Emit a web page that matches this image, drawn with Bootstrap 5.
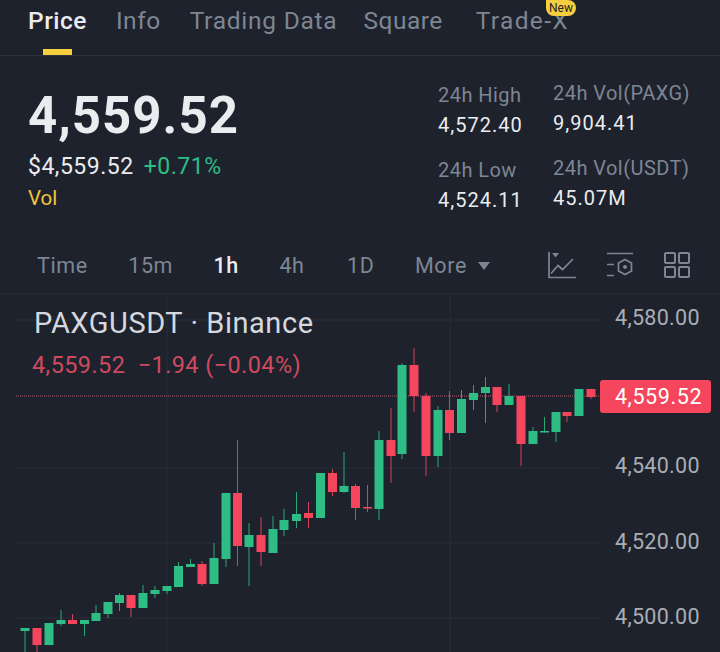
<!DOCTYPE html>
<html lang="en">
<head>
  <meta charset="UTF-8" />
  <title>PAXGUSDT</title>
  <link href="https://cdn.jsdelivr.net/npm/bootstrap@5.3.3/dist/css/bootstrap.min.css" rel="stylesheet">
  <style>
    body { background: #1e222d; font-family: Roboto, "Liberation Sans", sans-serif; color: #eaecef; width: 720px; height: 652px; overflow: hidden; }
    .tab-bar { height: 56px; padding-left: 28px; gap: 29px; border-bottom: 1px solid #2c323c; font-size: 24.5px; letter-spacing: .5px; color: #7d8693; }
    .tab-item { position: relative; line-height: 42px; }
    .tab-on { color: #eaecef; font-weight: 500; }
    .tab-on::after { content: ""; position: absolute; left: 15px; top: 49px; width: 29px; height: 6px; background: #f5cf3f; }
    .tab-wide { letter-spacing: .75px; margin-right: -3px; }
    .tab-last { letter-spacing: 1.35px; margin-left: 4px; }
    .new-tag { position: absolute; right: -7px; top: 0; width: 30px; height: 16px; border-radius: 0 8px 8px 8px; background: #f5cf3f; color: #1e222d; font-size: 12px; line-height: 16px; letter-spacing: 0; text-align: center; }
    .stats-wrap { height: 181px; padding: 0 52px 0 28px; }
    .stats-right { padding-top: 20px; }
    .big-price { font-size: 51px; font-weight: 700; line-height: 60px; margin-top: 30px; letter-spacing: 1px; color: #eaecef; }
    .sub-line { font-size: 23px; line-height: 26px; margin-top: 8px; letter-spacing: .5px; }
    .up-text { color: #2ebd85; }
    .vol-text { color: #f0c53c; font-size: 20.5px; line-height: 24px; margin-top: 6px; }
    .stat-col { width: 115px; padding-top: 3px; }
    .stat-col-b { padding-top: 1px; }
    .stat-label { font-size: 20px; line-height: 24px; color: #7d8693; letter-spacing: .45px; white-space: nowrap; }
    .stat-val { font-size: 20px; line-height: 24px; margin-top: 6px; margin-bottom: 21px; letter-spacing: 1px; color: #eaecef; }
    .tf-bar { height: 57px; padding: 2px 30px 0 37px; border-bottom: 1px solid #252a35; font-size: 21.5px; color: #7d8693; letter-spacing: .6px; }
    .tf-on { color: #eaecef; font-weight: 500; }
    .tf-list { gap: 40.5px; }
    .tf-shift { margin-left: 2px; }
    .tf-tri { display: inline-block; margin-left: 11px; border: 6.5px solid transparent; border-top: 8px solid #7d8693; border-bottom: 0; vertical-align: 3px; }
    .tool-icons { gap: 30px; margin-top: -2px; }
    .chart-area { position: relative; height: 358px; }
    .chart-area svg.plot { position: absolute; left: 0; top: 0; }
    .legend-name { position: absolute; left: 34px; top: 11px; font-size: 29px; line-height: 36px; letter-spacing: .55px; color: #d5d8de; }
    .legend-vals { position: absolute; left: 32px; top: 57px; font-size: 23.5px; line-height: 28px; letter-spacing: .4px; color: #cf4a5e; white-space: pre; }
    .axis-label { position: absolute; left: 615px; font-size: 21.5px; line-height: 26px; color: #a9adb5; letter-spacing: .3px; }
    .price-tag { position: absolute; left: 600px; top: 86px; width: 111px; height: 33px; padding-left: 6px; border-radius: 3px; background: #f6465d; color: #fff; font-size: 21.5px; line-height: 33px; text-align: center; letter-spacing: .6px; }
  </style>
</head>
<body>

  <div class="tab-bar d-flex align-items-start">
    <div class="tab-item tab-on">Price</div>
    <div class="tab-item">Info</div>
    <div class="tab-item tab-wide">Trading Data</div>
    <div class="tab-item">Square</div>
    <div class="tab-item tab-last">Trade-X<span class="new-tag">New</span></div>
  </div>

  <div class="stats-wrap d-flex justify-content-between">
    <div>
      <div class="big-price">4,559.52</div>
      <div class="sub-line">$4,559.52 <span class="up-text ms-1">+0.71%</span></div>
      <div class="vol-text">Vol</div>
    </div>
    <div class="stats-right d-flex">
      <div class="stat-col">
        <div class="stat-label mt-1">24h High</div>
        <div class="stat-val">4,572.40</div>
        <div class="stat-label">24h Low</div>
        <div class="stat-val">4,524.11</div>
      </div>
      <div class="stat-col stat-col-b">
        <div class="stat-label mt-1">24h Vol(PAXG)</div>
        <div class="stat-val">9,904.41</div>
        <div class="stat-label">24h Vol(USDT)</div>
        <div class="stat-val">45.07M</div>
      </div>
    </div>
  </div>

  <div class="tf-bar d-flex align-items-center justify-content-between">
    <div class="tf-list d-flex align-items-center">
      <span>Time</span><span>15m</span><span class="tf-on">1h</span><span>4h</span><span class="tf-shift">1D</span>
      <span>More<i class="tf-tri"></i></span>
    </div>
    <div class="tool-icons d-flex align-items-center">
      <svg width="28" height="28" viewBox="0 0 28 28" fill="none" stroke="#7d8693" stroke-width="1.7">
        <path d="M1 1V26.5H28M3 22.5L10 14.5L14.5 18.5L25 8"/>
        <path d="M4 2h7l-3.5 4.5z" fill="#7d8693" stroke="none"/>
      </svg>
      <svg width="28" height="28" viewBox="0 0 28 28" fill="none" stroke="#7d8693" stroke-width="1.7">
        <path d="M1 2.5H27M1 13.5H8M1 24.5H8"/>
        <path d="M19 8.5L25.5 12V20L19 23.5L12.5 20V12z"/>
        <circle cx="19" cy="16" r="2" fill="#7d8693" stroke="none"/>
      </svg>
      <svg width="26" height="26" viewBox="0 0 26 26" fill="none" stroke="#7d8693" stroke-width="2">
        <rect x="1" y="1" width="10" height="10" rx="1"/><rect x="15" y="1" width="10" height="10" rx="1"/>
        <rect x="1" y="15" width="10" height="10" rx="1"/><rect x="15" y="15" width="10" height="10" rx="1"/>
      </svg>
    </div>
  </div>

  <div class="chart-area">
    <svg class="plot" id="plot" width="720" height="358"></svg>
    <div class="legend-name">PAXGUSDT · Binance</div>
    <div class="legend-vals">4,559.52  −1.94 (−0.04%)</div>
    <div class="axis-label" style="top:11px">4,580.00</div>
    <div class="axis-label" style="top:159px">4,540.00</div>
    <div class="axis-label" style="top:235px">4,520.00</div>
    <div class="axis-label" style="top:310px">4,500.00</div>
    <div class="price-tag">4,559.52</div>
  </div>

  <script src="https://cdn.jsdelivr.net/npm/bootstrap@5.3.3/dist/js/bootstrap.bundle.min.js"></script>
  <script>
    // candles: x, up?, wick top, body top, body bottom, wick bottom (page y)
    const candles = [
      [25,1,628,628,631,660],[37,0,628,628,645,660],[49,1,623,623,645,645],[61,1,610,620,624,626],
      [72.5,0,614,620,624,624],[84.5,1,620,620,624,636],[96,1,605,613,621,621],[108,1,602,602,614,618],
      [119.5,1,593,595,603,611],[131,0,595,595,608,617],[143,1,585,593,608,608],[155,1,586,590,594,598],
      [167,1,586,586,591,594],[178.5,1,562,566,587,587],[190.5,1,559,564,567,567],[202,0,561,564,584,586],
      [214,1,543,558,584,584],[226,1,493,493,559,567],[237.5,0,440,493,546,566],[249,1,523,535,547,586],
      [261,0,517,535,552,566],[273,1,516,529,553,553],[284,1,509,520,530,536],[296.5,1,492,514,521,528],
      [308.5,0,502,513,518,528],[320.5,1,473,473,518,518],[332.5,0,469,473,492,496],[344,1,452,486,492,493],
      [355.5,0,484,486,508,520],[367.5,0,485,507,508.5,512],[379,1,431,440,509,520],[391,0,408,440,456,483],
      [402,1,363,365,454,459],[414,0,348,365,396,412],[426,0,393,396,456,476],[438,1,406,410,456,467],
      [449.5,0,391,410,433,440],[461.5,1,390,399,433,433],[473.5,1,385,393,400,410],[485.5,1,377,387,393,423],
      [497,0,387,387,405,412],[509,1,384,396,405,405],[521,0,396,396,444,466],[533,1,427,431,444,444],
      [544.5,1,417,431,432.5,432.5],[556,1,412,412,432,442],[567,0,412,412,416,422],[579,1,389,389,416,416],
      [591,0,389,389,397,399]
    ];
    const top0 = 294;
    let out = '';
    // grid
    [320, 468, 543, 618].forEach(y => {
      out += `<line x1="16" x2="600" y1="${y - top0}" y2="${y - top0}" stroke="#272c37" stroke-width="1"/>`;
    });
    [167, 450].forEach(x => {
      out += `<line x1="${x}" x2="${x}" y1="0" y2="358" stroke="#272c37" stroke-width="1"/>`;
    });
    out += `<line x1="16" x2="600" y1="${396 - top0}" y2="${396 - top0}" stroke="#a8566a" stroke-width="1" stroke-dasharray="1 1"/>`;
    candles.forEach(([x, up, wt, bt, bb, wb]) => {
      const col = up ? '#2ebd85' : '#f6465d';
      out += `<rect x="${x - 0.5}" y="${wt - top0}" width="1" height="${wb - wt}" fill="${col}" opacity=".85"/>`;
      out += `<rect x="${x - 4.5}" y="${bt - top0}" width="9" height="${bb - bt}" fill="${col}"/>`;
    });
    document.getElementById('plot').innerHTML = out;
  </script>

</body>
</html>
